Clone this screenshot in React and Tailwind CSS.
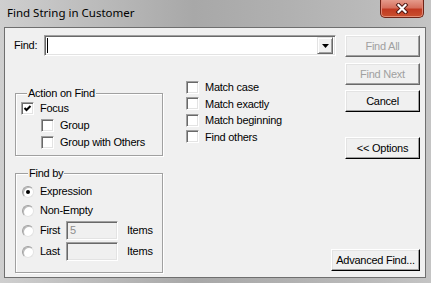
import React from 'react';

const Btn = ({ children, disabled, className = '' }) => (
  <div
    className={`h-[22px] flex items-center justify-center bg-[#f0f0f0] border border-t-white border-l-white ${
      disabled
        ? 'border-r-[#696969] border-b-[#696969] text-[#a0a0a0]'
        : 'border-r-[#000] border-b-[#000] text-black'
    } shadow-[inset_-1px_-1px_0_#a0a0a0,inset_1px_1px_0_#e3e3e3] ${className}`}
  >
    {children}
  </div>
);

const Check = ({ checked }) => (
  <span className="w-[13px] h-[13px] shrink-0 flex items-center justify-center bg-white border border-t-[#a0a0a0] border-l-[#a0a0a0] border-r-white border-b-white shadow-[inset_1px_1px_0_#696969,inset_-1px_-1px_0_#e3e3e3]">
    {checked && (
      <svg width="9" height="9" viewBox="0 0 9 9">
        <polyline points="1.5,4 3.5,6 7.5,2" fill="none" stroke="#000" strokeWidth="2" />
      </svg>
    )}
  </span>
);

const Radio = ({ checked }) => (
  <span className="w-[12px] h-[12px] shrink-0 rounded-full flex items-center justify-center bg-white border border-t-[#a0a0a0] border-l-[#a0a0a0] border-r-[#e3e3e3] border-b-[#e3e3e3] shadow-[inset_1px_1px_0_#b9b9b9]">
    {checked && <span className="w-[4px] h-[4px] rounded-full bg-black" />}
  </span>
);

const CheckRow = ({ label, checked, className = '' }) => (
  <div className={`flex items-center gap-[6px] ${className}`}>
    <Check checked={checked} />
    <span>{label}</span>
  </div>
);

const Sunken = ({ className = '', children }) => (
  <div
    className={`border border-t-[#a0a0a0] border-l-[#a0a0a0] border-r-white border-b-white shadow-[inset_1px_1px_0_#696969,inset_-1px_-1px_0_#e3e3e3] ${className}`}
  >
    {children}
  </div>
);

export default function App() {
  return (
    <div className="w-[431px] h-[283px] flex flex-col overflow-hidden bg-[linear-gradient(90deg,#cfcfcf_0%,#bdbdbd_20%,#a8a8a8_45%,#b0b0b0_65%,#bababa_85%,#c4c4c4_100%)] font-['Liberation_Sans',Arial,sans-serif] text-[11px] tracking-[-0.25px] text-black">
      {/* Title bar */}
      <div className="h-[27px] flex items-start justify-between pl-[7px] pr-[7px]">
        <span className="mt-[5px] leading-[16px] text-[11.5px] tracking-normal font-['Noto_Sans',sans-serif] text-black">
          Find String in Customer
        </span>
        <div className="w-[44px] h-[18px] flex items-center justify-center rounded-b-[5px] border border-t-0 border-[#6e2418] bg-[linear-gradient(180deg,#e59a8b_0%,#d6705e_45%,#c13a22_55%,#c9502f_100%)] shadow-[inset_0_-1px_0_#e48c74,inset_1px_0_0_#e08878,inset_-1px_0_0_#e08878]">
          <svg width="14" height="11" viewBox="0 0 14 11">
            <path d="M3.5 2L10.5 9M10.5 2L3.5 9" stroke="#4a1410" strokeWidth="4" strokeLinecap="square" />
            <path d="M3.5 2L10.5 9M10.5 2L3.5 9" stroke="#fff" strokeWidth="2.2" strokeLinecap="square" />
          </svg>
        </div>
      </div>

      {/* Client area */}
      <div className="ml-[4px] w-[422px] h-[251px] border border-[#6f6f6f] bg-[#f0f0f0] flex">
        {/* Main */}
        <div className="flex-1 pl-[9px] flex flex-col">
          {/* Find row */}
          <div className="mt-[7px] flex items-center h-[21px]">
            <span className="w-[30px]">Find:</span>
            <Sunken className="w-[292px] h-[21px] bg-white flex items-center justify-between pl-[2px] pr-[2px]">
              <span className="w-px h-[15px] bg-black" />
              <div className="w-[16px] h-[17px] flex items-center justify-center bg-[#f0f0f0] border border-t-[#e3e3e3] border-l-[#e3e3e3] border-r-[#696969] border-b-[#696969] shadow-[inset_1px_1px_0_#fff,inset_-1px_-1px_0_#a0a0a0]">
                <svg width="7" height="4" viewBox="0 0 7 4">
                  <path d="M0 0H7L3.5 4Z" fill="#000" />
                </svg>
              </div>
            </Sunken>
          </div>

          {/* Lower */}
          <div className="mt-[23px] pl-[1px] flex">
            <div className="w-[148px] flex flex-col">
              <fieldset className="mt-[8px] border border-[#a0a0a0] shadow-[inset_1px_1px_0_#fff,1px_1px_0_#fff] pl-[5px] pb-[4px]">
                <legend className="ml-[6px] px-[1px] leading-[13px] bg-[#f0f0f0]">Action on Find</legend>
                <CheckRow label="Focus" checked className="h-[17px]" />
                <CheckRow label="Group" className="h-[17px] pl-[20px]" />
                <CheckRow label="Group with Others" className="h-[17px] pl-[20px]" />
              </fieldset>

              <fieldset className="mt-[11px] border border-[#a0a0a0] shadow-[inset_1px_1px_0_#fff,1px_1px_0_#fff] pl-[6px] pb-[10px]">
                <legend className="ml-[6px] px-[1px] leading-[13px] bg-[#f0f0f0]">Find by</legend>
                <div className="mt-[2px] h-[19px] flex items-center gap-[6px]">
                  <Radio checked />
                  <span>Expression</span>
                </div>
                <div className="h-[19px] flex items-center gap-[6px]">
                  <Radio />
                  <span>Non-Empty</span>
                </div>
                <div className="h-[21px] flex items-center">
                  <Radio />
                  <span className="ml-[6px] w-[26px]">First</span>
                  <Sunken className="w-[52px] h-[19px] bg-[#f0f0f0] flex items-center pl-[3px] text-[#8d8d8d]">5</Sunken>
                  <span className="ml-[9px]">Items</span>
                </div>
                <div className="h-[21px] flex items-center">
                  <Radio />
                  <span className="ml-[6px] w-[26px]">Last</span>
                  <Sunken className="w-[52px] h-[19px] bg-[#f0f0f0]" />
                  <span className="ml-[9px]">Items</span>
                </div>
              </fieldset>
            </div>

            <div className="ml-[23px] flex flex-col">
              <CheckRow label="Match case" className="h-[16.5px]" />
              <CheckRow label="Match exactly" className="h-[16.5px]" />
              <CheckRow label="Match beginning" className="h-[16.5px]" />
              <CheckRow label="Find others" className="h-[16.5px]" />
            </div>
          </div>
        </div>

        {/* Buttons */}
        <div className="w-[75px] mr-[5px] flex flex-col items-end">
          <Btn disabled className="mt-[7px] w-[75px]">Find All</Btn>
          <Btn disabled className="mt-[6px] w-[75px]">Find Next</Btn>
          <Btn className="mt-[5px] w-[75px]">Cancel</Btn>
          <Btn className="mt-[25px] w-[75px]">&lt;&lt; Options</Btn>
          <div className="flex-1" />
          <Btn className="mb-[6px] w-[89px] shrink-0">Advanced Find...</Btn>
        </div>
      </div>
    </div>
  );
}
